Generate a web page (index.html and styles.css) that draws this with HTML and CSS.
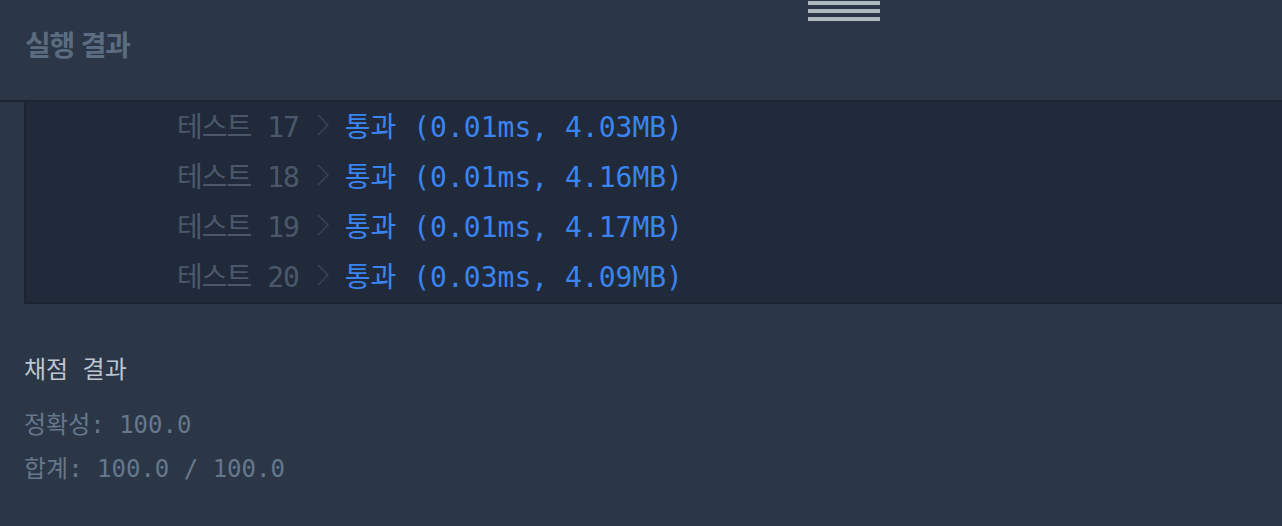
FILE: index.html
```html
<!DOCTYPE html>
<html lang="ko">
<head>
    <meta charset="UTF-8">
    <meta name="viewport" content="width=device-width, initial-scale=1.0">
    <title>실행 결과</title>
    <link rel="stylesheet" href="styles.css">
</head>
<body>
    <div class="grip">
        <span></span>
        <span></span>
        <span></span>
    </div>
    <header class="head">
        <h2 class="head-title">실행 결과</h2>
    </header>
    <section class="console">
        <div class="row">
            <span class="label">테스트 17</span>
            <svg class="chev" width="12" height="22" viewBox="0 0 12 22"><polyline points="1,1 11,11 1,21" fill="none" stroke="#3a4658" stroke-width="1.4"/></svg>
            <span class="pass">통과 (0.01ms, 4.03MB)</span>
        </div>
        <div class="row">
            <span class="label">테스트 18</span>
            <svg class="chev" width="12" height="22" viewBox="0 0 12 22"><polyline points="1,1 11,11 1,21" fill="none" stroke="#3a4658" stroke-width="1.4"/></svg>
            <span class="pass">통과 (0.01ms, 4.16MB)</span>
        </div>
        <div class="row">
            <span class="label">테스트 19</span>
            <svg class="chev" width="12" height="22" viewBox="0 0 12 22"><polyline points="1,1 11,11 1,21" fill="none" stroke="#3a4658" stroke-width="1.4"/></svg>
            <span class="pass">통과 (0.01ms, 4.17MB)</span>
        </div>
        <div class="row">
            <span class="label">테스트 20</span>
            <svg class="chev" width="12" height="22" viewBox="0 0 12 22"><polyline points="1,1 11,11 1,21" fill="none" stroke="#3a4658" stroke-width="1.4"/></svg>
            <span class="pass">통과 (0.03ms, 4.09MB)</span>
        </div>
    </section>
    <section class="score">
        <h3 class="score-title">채점 결과</h3>
        <p class="score-line">정확성: 100.0</p>
        <p class="score-line">합계: 100.0 / 100.0</p>
    </section>
</body>
</html>
```

FILE: styles.css
```css
body {
    margin: 0;
    background-color: #2b3647;
    font-family: "Noto Sans CJK KR", "Noto Sans", sans-serif;
    overflow: hidden;
}

.grip {
    position: absolute;
    top: 1px;
    left: 808px;
    display: flex;
    flex-direction: column;
    gap: 4px;
}
.grip span {
    display: block;
    width: 72px;
    height: 4px;
    background-color: #aeb8c1;
}

.head {
    border-bottom: 2px solid #1d2533;
    padding: 25px 25px 0;
    box-sizing: border-box;
    height: 102px;
}
.head-title {
    margin: 0;
    font-size: 28px;
    line-height: 38px;
    font-weight: 700;
    letter-spacing: -1.2px;
    color: #5b6c81;
}

.console {
    margin-left: 24px;
    margin-right: -20px;
    background-color: #212a3a;
    border-left: 2px solid #1c2331;
    border-bottom: 2px solid #1c2331;
    padding-left: 151px;
    font-family: "DejaVu Sans Mono", "Noto Sans CJK KR", monospace;
    font-size: 28px;
}
.row {
    display: flex;
    align-items: center;
    height: 50px;
    padding-bottom: 5px;
    box-sizing: border-box;
    white-space: pre;
}
.label {
    color: #4b586b;
    letter-spacing: -1px;
}
.chev {
    margin: 0 16px 0 18px;
}
.pass {
    color: #3a84f2;
}

.score {
    padding: 51px 24px 0;
}
.score-title {
    margin: 0 0 25px;
    font-family: "DejaVu Sans Mono", "Noto Sans CJK KR", monospace;
    font-size: 24px;
    line-height: 30px;
    font-weight: 400;
    color: #bcc5d0;
}
.score-line {
    margin: 0 0 14px;
    font-family: "DejaVu Sans Mono", "Noto Sans CJK KR", monospace;
    font-size: 24px;
    line-height: 30px;
    color: #65788c;
}
```
